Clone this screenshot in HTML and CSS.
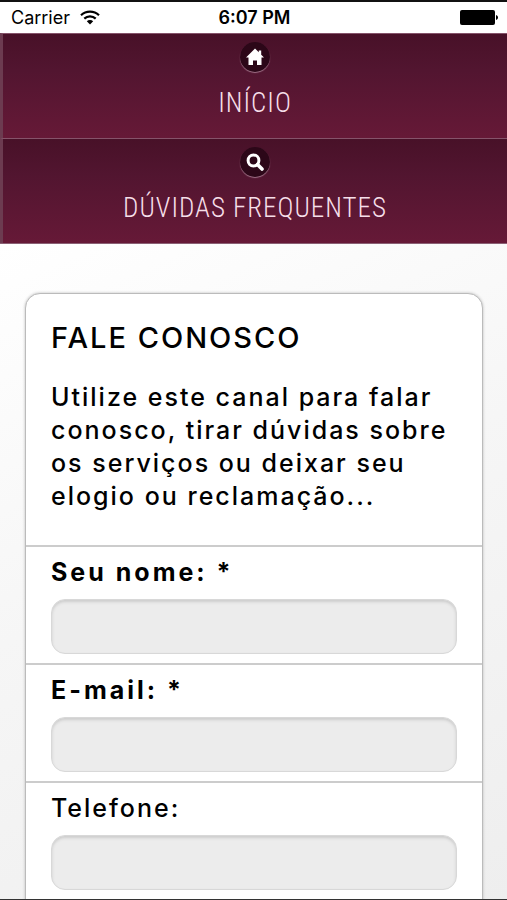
FILE: index.html
```html
<!DOCTYPE html>
<html lang="pt-BR">
<head>
    <meta charset="UTF-8">
    <meta name="viewport" content="width=device-width, initial-scale=1.0">
    <title>Fale Conosco</title>
    <link rel="stylesheet" href="styles.css">
</head>
<body>
    <header class="status-bar">
        <div class="status-left">
            <span>Carrier</span>
            <svg class="wifi" viewBox="0 0 20 15" aria-hidden="true">
                <path d="M1 5.2a13 13 0 0 1 18 0" fill="none" stroke="#000" stroke-width="2.2"/>
                <path d="M4.3 8.6a8.2 8.2 0 0 1 11.4 0" fill="none" stroke="#000" stroke-width="2.2"/>
                <path d="M6.8 11.2a4.6 4.6 0 0 1 6.4 0L10 14.6z"/>
            </svg>
        </div>
        <span class="status-time">6:07 PM</span>
        <div class="status-right">
            <svg class="battery" viewBox="0 0 38 15" aria-hidden="true">
                <rect x="0" y="0" width="35" height="15" rx="2"/>
                <path d="M36 5c1.4.4 2 1.3 2 2.5s-.6 2.1-2 2.5z"/>
            </svg>
        </div>
    </header>

    <nav class="menu">
        <a class="menu-item" href="#inicio">
            <span class="menu-icon">
                <svg viewBox="0 0 18 18" aria-hidden="true">
                    <path d="M9 .5 0 9.5h2.500V17H7v-4.500h4V17h4.500V9.500H18L15.200 6.700V2.500h-2.400v1.800z" fill="#fff"/>
                </svg>
            </span>
            <span>INÍCIO</span>
        </a>
        <a class="menu-item" href="#duvidas">
            <span class="menu-icon">
                <svg viewBox="0 0 18 18" aria-hidden="true">
                    <circle cx="7.5" cy="7.5" r="5.4" fill="none" stroke="#fff" stroke-width="3"/>
                    <path d="M11.5 11.5 16 16" stroke="#fff" stroke-width="3.6" stroke-linecap="round"/>
                </svg>
            </span>
            <span>DÚVIDAS FREQUENTES</span>
        </a>
    </nav>

    <main class="content">
        <form class="card">
            <div class="intro">
                <h1>FALE CONOSCO</h1>
                <p>Utilize este canal para falar conosco, tirar dúvidas sobre os serviços ou deixar seu elogio ou reclamação...</p>
            </div>
            <div class="field">
                <label class="required" for="nome">Seu nome: *</label>
                <input type="text" id="nome" required>
            </div>
            <div class="field">
                <label class="required" for="email">E-mail: *</label>
                <input type="email" id="email" required>
            </div>
            <div class="field">
                <label for="telefone">Telefone:</label>
                <input type="tel" id="telefone">
            </div>
        </form>
    </main>
</body>
</html>
```
FILE: styles.css
```css
* {
    box-sizing: border-box;
}

body {
    margin: 0;
    height: 100vh;
    display: flex;
    flex-direction: column;
    border-top: 2px solid #111;
    border-bottom: 1px solid #333;
    background: #fff;
    color: #000;
    font-family: Inter, "Open Sans", sans-serif;
}

/* Status bar */
.status-bar {
    flex: none;
    display: grid;
    grid-template-columns: 1fr auto 1fr;
    align-items: center;
    height: 31px;
    padding: 0 9px 0 11px;
    background: #fff;
    font-size: 18px;
}

.status-left {
    display: flex;
    align-items: center;
    gap: 10px;
}

.wifi {
    width: 20px;
    height: 15px;
}

.status-time {
    font-weight: 600;
}

.status-right {
    display: flex;
    justify-content: flex-end;
}

.battery {
    width: 38px;
    height: 15px;
}

/* Menu */
.menu {
    flex: none;
    border-bottom: 1px solid #8a6074;
}

.menu-item {
    display: flex;
    flex-direction: column;
    align-items: center;
    gap: 8px;
    height: 105px;
    padding-top: 8px;
    border-top: 1px solid #85536a;
    border-left: 3px solid #6c3b50;
    background: linear-gradient(#481128, #521530 35%, #661937);
    color: #f6dfe9;
    font-family: "Roboto Condensed", "Liberation Sans Narrow", sans-serif;
    font-size: 27px;
    font-weight: 300;
    line-height: 46px;
    letter-spacing: 1px;
    text-decoration: none;
}

.menu-icon {
    flex: none;
    display: flex;
    align-items: center;
    justify-content: center;
    width: 30px;
    height: 30px;
    border-radius: 50%;
    background: #2c0718;
    box-shadow: 0 1px 1px #a07288;
}

.menu-icon svg {
    width: 18px;
    height: 18px;
}

/* Content */
.content {
    flex: 1;
    min-height: 0;
    padding: 49px 24px 24px 25px;
    overflow-y: auto;
    scrollbar-width: none;
    background: linear-gradient(155deg, #fff, #f6f6f6 45%, #eee);
}

.card {
    padding-bottom: 24px;
    border: 1px solid #bbb;
    border-radius: 15px;
    background: #fff;
    box-shadow: 0 0 3px #bbb;
}

.intro {
    padding: 26px 25px 32px;
}

h1 {
    margin: 0 0 25px;
    font-size: 29px;
    font-weight: 500;
    line-height: 36px;
    letter-spacing: 2px;
}

p {
    margin: 0;
    font-size: 25px;
    font-weight: 500;
    line-height: 33px;
    letter-spacing: 2px;
}

.field {
    padding: 9px 25px;
    border-top: 2px solid #ccc;
}

.field label {
    display: block;
    margin-bottom: 10px;
    font-size: 25px;
    font-weight: 500;
    line-height: 33px;
    letter-spacing: 2px;
}

.field .required {
    font-weight: 700;
    letter-spacing: 3px;
}

.field input {
    display: block;
    width: 100%;
    height: 55px;
    padding: 0 14px;
    border: 1px solid #d8d8d8;
    border-radius: 14px;
    background: #ececec;
    box-shadow: inset 0 2px 3px #ccc;
    font-family: inherit;
    font-size: 25px;
}
```
